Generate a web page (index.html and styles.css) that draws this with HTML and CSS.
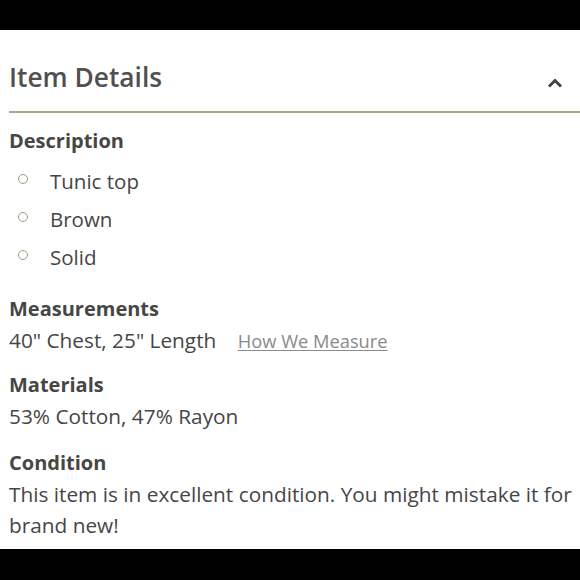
FILE: index.html
```html
<!DOCTYPE html>
<html>
<head>
<meta charset="utf-8">
<link rel="stylesheet" href="styles.css">
</head>
<body>
<div class="bar"></div>
<div class="panel">
  <div class="header">
    <h2 class="title">Item Details</h2>
    <svg class="chevron" width="16" height="10" viewBox="0 0 16 10"><path d="M2 8.5 L8 2.5 L14 8.5" fill="none" stroke="#444" stroke-width="3" stroke-linecap="butt" stroke-linejoin="miter"/></svg>
  </div>
  <div class="content">
    <div class="section first">
      <div class="label">Description</div>
      <ul class="list">
        <li>Tunic top</li>
        <li>Brown</li>
        <li>Solid</li>
      </ul>
    </div>
    <div class="section measure">
      <div class="label">Measurements</div>
      <div class="value">40" Chest, 25" Length <a class="link" href="#">How We Measure</a></div>
    </div>
    <div class="section">
      <div class="label">Materials</div>
      <div class="value">53% Cotton, 47% Rayon</div>
    </div>
    <div class="section condition">
      <div class="label">Condition</div>
      <div class="value">This item is in excellent condition. You might mistake it for brand new!</div>
    </div>
  </div>
</div>
<div class="bar bottom"></div>
</body>
</html>
```
FILE: styles.css
```css
html, body {
  margin: 0;
  padding: 0;
  background: #fff;
}
body {
  width: 580px;
  height: 580px;
  overflow: hidden;
  display: flex;
  flex-direction: column;
  font-family: "Open Sans", "Lato", sans-serif;
  font-variant-ligatures: none;
  color: #464646;
}
.bar {
  height: 30px;
  background: #000;
  flex: none;
}
.bar.bottom {
  height: 31px;
  margin-top: auto;
}
.panel {
  padding-left: 9px;
  flex: 1;
  overflow: hidden;
}
.header {
  height: 71px;
  padding-top: 10px;
  padding-right: 17px;
  display: flex;
  align-items: center;
  justify-content: space-between;
  border-bottom: 2px solid #aaa68c;
}
.title {
  margin: 0;
  padding-top: 2px;
  font-size: 26.3px;
  line-height: 34px;
  font-weight: 600;
  color: #505050;
}
.chevron {
  margin-top: 15px;
}
.content {
  padding-top: 12px;
}
.section {
  margin-top: 13px;
}
.section.first {
  margin-top: 0;
}
.section.measure {
  margin-top: 17px;
}
.section.condition {
  margin-top: 15px;
}
.label {
  font-size: 20px;
  line-height: 32px;
  font-weight: 700;
  color: #464646;
}
.value {
  font-size: 20.8px;
  line-height: 31px;
}
.list {
  list-style: none;
  margin: 5px 0 0 0;
  padding: 0;
}
.list li {
  font-size: 20.5px;
  line-height: 38px;
  display: flex;
  align-items: center;
}
.list li::before {
  content: "";
  width: 8px;
  height: 8px;
  border: 1px solid #9f9a7d;
  border-radius: 50%;
  margin: -4px 22px 0 9px;
  flex: none;
}
.link {
  margin-left: 16px;
  font-size: 18.3px;
  color: #8a8a8a;
  text-decoration: underline;
  text-underline-offset: 2px;
}
```
